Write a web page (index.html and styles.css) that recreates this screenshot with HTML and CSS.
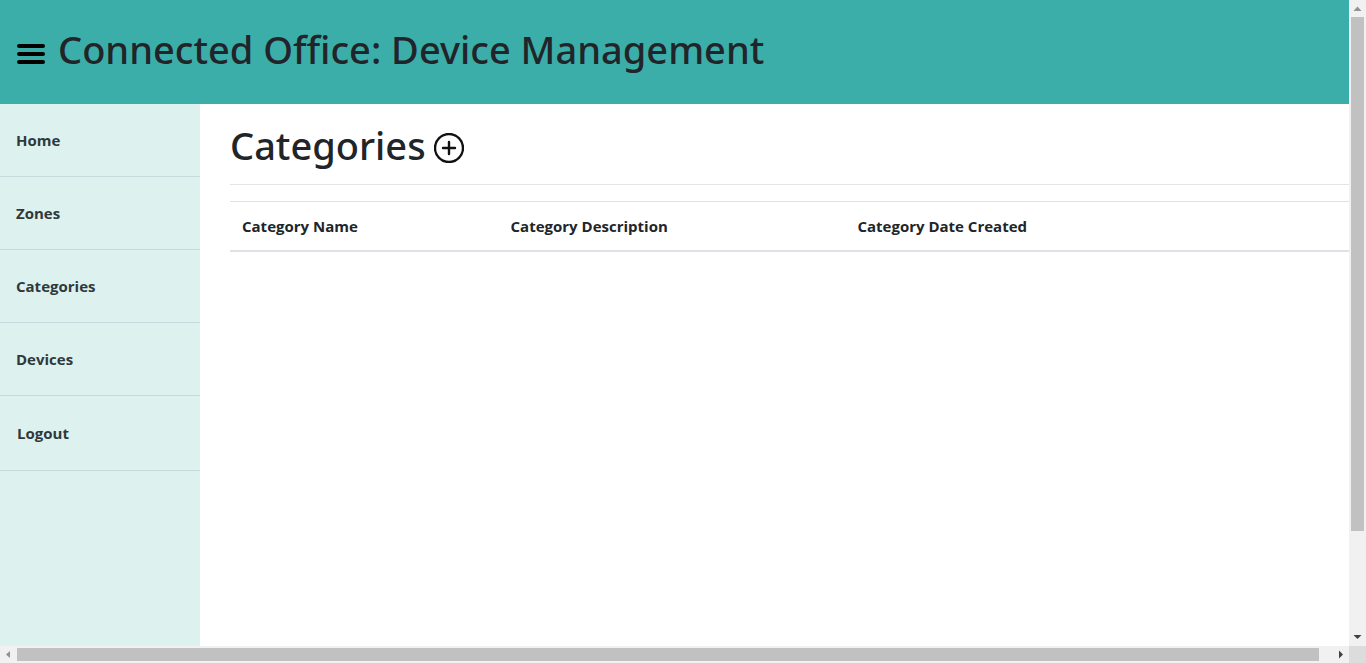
FILE: index.html
```html
<!DOCTYPE html>
<html lang="en">
<head>
<meta charset="utf-8">
<title>Categories - Connected Office</title>
<link rel="stylesheet" href="styles.css">
</head>
<body>
<div class="window">
  <div class="page">
    <header class="header">
      <button class="menu-button" type="button" aria-label="Menu">
        <svg class="menu-icon" viewBox="0 0 28 22" aria-hidden="true"><path d="M2 3H26M2 11H26M2 19H26"/></svg>
      </button>
      <h1 class="title">Connected Office: Device Management</h1>
    </header>
    <div class="body">
      <nav class="sidebar">
        <a class="nav-link" href="#">Home</a>
        <a class="nav-link" href="#">Zones</a>
        <a class="nav-link" href="#">Categories</a>
        <a class="nav-link" href="#">Devices</a>
        <button class="nav-link nav-button" type="button">Logout</button>
      </nav>
      <main class="content">
        <div class="heading">
          <h1 class="title">Categories</h1>
          <a class="add-link" href="#" aria-label="Add category">
            <svg class="add-icon" viewBox="0 0 30 30" aria-hidden="true"><circle cx="15" cy="15" r="14"/><path d="M15 9V21M9 15H21"/></svg>
          </a>
        </div>
        <table class="table">
          <thead>
            <tr>
              <th class="col-name" scope="col">Category Name</th>
              <th class="col-description" scope="col">Category Description</th>
              <th scope="col">Category Date Created</th>
            </tr>
          </thead>
        </table>
      </main>
    </div>
  </div>
  <div class="scrollbar vertical" aria-hidden="true">
    <svg class="arrow" viewBox="0 0 17 17"><path class="muted" d="M4.500 11L8.500 6.500L12.500 11Z"/></svg>
    <div class="track"><div class="thumb"></div></div>
    <svg class="arrow" viewBox="0 0 17 17"><path d="M4.500 6L8.500 10L12.500 6Z"/></svg>
  </div>
  <div class="scrollbar horizontal" aria-hidden="true">
    <svg class="arrow" viewBox="0 0 17 17"><path class="muted" d="M10 5L6 8.500L10 12Z"/></svg>
    <div class="track"><div class="thumb"></div></div>
    <svg class="arrow" viewBox="0 0 17 17"><path d="M7 4.500L11 8.500L7 12.500Z"/></svg>
  </div>
  <div class="corner"></div>
</div>
</body>
</html>
```
FILE: styles.css
```css
* {
  box-sizing: border-box;
}

body {
  margin: 0;
  font-family: "Segoe UI", "Open Sans", "Noto Sans", sans-serif;
  font-size: 15px;
  line-height: 24px;
  color: #212529;
  background: #fff;
}

.window {
  display: grid;
  grid-template-columns: minmax(0, 1fr) 17px;
  grid-template-rows: minmax(0, 1fr) 17px;
  height: 100vh;
}

.page {
  display: flex;
  flex-direction: column;
  overflow: hidden;
}

.header {
  display: flex;
  align-items: center;
  gap: 13px;
  padding: 25px 17px 31px;
  background: #3caea9;
}

.title {
  margin: 0;
  font-family: "Segoe UI", "Noto Sans", "Open Sans", sans-serif;
  font-size: 38px;
  font-weight: 500;
  line-height: 48px;
  white-space: nowrap;
}

.menu-button {
  padding: 9px 0 0;
  border: 0;
  background: none;
}

.menu-icon {
  display: block;
  width: 28px;
  height: 22px;
  fill: none;
  stroke: #000;
  stroke-width: 4;
  stroke-linecap: round;
}

.body {
  display: flex;
  flex: 1;
}

.sidebar {
  flex: 0 0 200px;
  background: #ddf2ef;
}

.nav-link {
  display: block;
  width: 100%;
  padding: 24px 16px;
  border: 0;
  border-bottom: 1px solid #c5dadd;
  background: none;
  color: #30383b;
  font: inherit;
  font-weight: 700;
  text-align: left;
  text-decoration: none;
}

.nav-button {
  padding: 25px 17px;
}

.content {
  flex: 1;
  min-width: 0;
  padding: 17px 0 0 30px;
}

.heading {
  display: flex;
  align-items: center;
  gap: 8px;
  margin-bottom: 16px;
  padding-bottom: 15px;
  border-bottom: 1px solid #e5e5e5;
}

.add-icon {
  display: block;
  width: 30px;
  height: 30px;
  margin-top: 6px;
  fill: none;
  stroke: #111;
  stroke-width: 2.4;
  stroke-linecap: round;
}

.table {
  width: 100%;
  table-layout: fixed;
  border-spacing: 0;
}

.table th {
  padding: 12px;
  border-top: 1px solid #dee2e6;
  border-bottom: 2px solid #dee2e6;
  font-weight: 700;
  text-align: left;
}

.col-name {
  width: 24%;
}

.col-description {
  width: 31%;
}

.scrollbar {
  display: flex;
  background: #f1f1f1;
}

.vertical {
  flex-direction: column;
}

.arrow {
  flex: none;
  width: 17px;
  height: 17px;
  fill: #404040;
}

.muted {
  fill: #929292;
}

.track {
  flex: 1;
}

.thumb {
  background: #c1c1c1;
}

.vertical .thumb {
  width: 13px;
  height: 84%;
  margin: 0 auto;
}

.horizontal .track {
  padding: 2px 0;
}

.horizontal .thumb {
  width: 99%;
  height: 13px;
}

.corner {
  background: #dcdcdc;
}
```
